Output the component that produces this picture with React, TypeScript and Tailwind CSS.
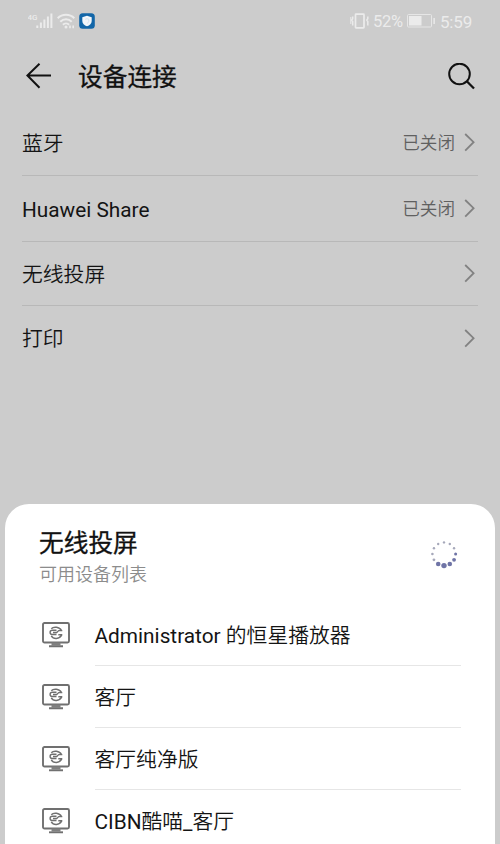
import type { ReactNode } from 'react'

const FONT = "font-['Roboto','Noto_Sans_CJK_SC',sans-serif]"

const settings = [
  { label: '蓝牙', status: '已关闭', height: 'h-[66px]' },
  { label: 'Huawei Share', status: '已关闭', height: 'h-[66px]' },
  { label: '无线投屏', status: '', height: 'h-16' },
  { label: '打印', status: '', height: 'h-16' },
]

const devices = ['Administrator 的恒星播放器', '客厅', '客厅纯净版', 'CIBN酷喵_客厅']

// clockwise from the top
const spinnerDots = [1.2, 1.2, 1.2, 1.5, 1.9, 2.3, 2.7, 2.3, 1.4, 1.3, 1.2, 1.2]

function SignalIcon() {
  return (
    <svg width="25" height="16" viewBox="0 0 25 16" fill="#ebebeb">
      <text x="-0.5" y="7" fontSize="8" fontFamily="Roboto, sans-serif" fontWeight="500">4G</text>
      <rect x="8.3" y="12.5" width="2" height="2.5" />
      <rect x="11.9" y="9.5" width="2" height="5.5" />
      <rect x="15.4" y="6.5" width="2" height="8.5" />
      <rect x="18.9" y="3.5" width="2" height="11.5" />
      <rect x="22.4" y="0.5" width="2" height="14.5" />
    </svg>
  )
}

function WifiIcon() {
  return (
    <svg width="18" height="16" viewBox="0 0 18 16" fill="none" stroke="#ebebeb" strokeWidth="2">
      <path d="M.7 5.2a11.8 11.8 0 0 1 16.6 0" />
      <path d="M3.3 8.7a8 8 0 0 1 11.4 0" />
      <path d="M5.9 11.8a4.4 4.4 0 0 1 6.2 0" />
      <circle cx="9" cy="14" r="1.5" fill="#ebebeb" stroke="none" />
      <path d="M13 12.5v2.7M16.2 12.5v2.7" strokeWidth="1.6" />
    </svg>
  )
}

function ShieldBadge() {
  return (
    <svg width="16" height="16" viewBox="0 0 16 16">
      <rect x="0.2" y="0.2" width="15.6" height="15.6" rx="3.5" fill="#1266a8" />
      <path d="M8 2.8l4.7 1.4v3.8c0 2.7-1.9 4.4-4.7 5.2-2.8-.8-4.7-2.5-4.7-5.2V4.2z" fill="#f2f6fa" />
      <path d="M6.2 6.3 8 5.7l1.8.6v1.9c0 1.1-.8 1.7-1.8 2.1" fill="none" stroke="#c9dded" strokeWidth="0.8" />
    </svg>
  )
}

function VibrateIcon() {
  return (
    <svg width="20" height="16" viewBox="0 0 20 16" fill="none" stroke="#ebebeb" strokeWidth="1.5">
      <rect x="5.5" y="1.2" width="8.5" height="13.6" rx="0.5" strokeWidth="1.7" />
      <path d="M2.7 3.5v2.3L1.7 7l1 1.500v4M17.800 3.500v2.300l-1 1.200 1 1.500v4" />
      <path d="M.8 4v7" strokeWidth="1" />
    </svg>
  )
}

function BatteryIcon() {
  return (
    <svg width="29" height="14" viewBox="0 0 29 14">
      <rect x="0.5" y="0.5" width="24" height="12.5" rx="1" fill="none" stroke="#e6e6e6" />
      <rect x="2" y="2" width="12.5" height="9.5" fill="#ebebeb" />
      <rect x="26.3" y="4" width="1.7" height="6" fill="#e6e6e6" />
    </svg>
  )
}

function Chevron() {
  return (
    <svg width="11" height="19" viewBox="0 0 11 19" fill="none" stroke="#828282" strokeWidth="1.8">
      <path d="M1.2 1 9.600 9.200 1.200 17.600" />
    </svg>
  )
}

function MonitorIcon() {
  return (
    <svg width="28" height="26" viewBox="0 0 28 26" fill="none" stroke="#707070">
      <rect x="1" y="1" width="26" height="19.500" rx="1.500" strokeWidth="1.900" />
      <path d="M9.500 20.500h9v3h-9z" fill="#808080" stroke="none" />
      <path d="M7 24.300h14" strokeWidth="1.900" />
      <path d="M9.300 6.800C11.500 4.300 17.500 4.500 19.500 8.600M9.300 13.800c2 3.600 8.300 3.600 10.300-.9" strokeWidth="1.500" />
      <path d="M14.500 8.300h-4c-3.200 0-3.200 4.200 0 4.200h4M20.300 8.600h-3.600l-2 1.900h-3.700M20.300 12.700h-4" strokeWidth="1.400" />
    </svg>
  )
}

function Spinner() {
  return (
    <svg width="30" height="30" viewBox="-15 -15 30 30">
      {spinnerDots.map((r, i) => {
        const angle = (i * Math.PI) / 6
        return (
          <circle
            key={i}
            cx={11.6 * Math.sin(angle)}
            cy={-11.6 * Math.cos(angle)}
            r={r}
            fill={r > 1.4 ? '#6f74a6' : '#a6a8ba'}
          />
        )
      })}
    </svg>
  )
}

function StatusBar() {
  return (
    <div className="flex h-[42px] shrink-0 items-center justify-between px-7 text-[#ebebeb]">
      <div className="flex items-center gap-1">
        <SignalIcon />
        <WifiIcon />
        <ShieldBadge />
      </div>
      <div className="flex items-center text-[17px] leading-none">
        <VibrateIcon />
        <span className="ml-[3px] mr-[4px] pt-[2px] text-[16.5px] tracking-[-0.2px]">52%</span>
        <BatteryIcon />
        <span className="ml-[4px] pt-[2px] tracking-[-0.2px]">5:59</span>
      </div>
    </div>
  )
}

// Latin runs stay regular, Chinese runs use the lighter cut
function Label({ text }: { text: string }) {
  return (
    <span className="whitespace-pre text-[20.8px] font-[350] leading-none">
      {text.split(/([ -~]+)/).map((part, i) =>
        i % 2 ? <span key={i} className="font-normal">{part}</span> : part
      )}
    </span>
  )
}

function Divided({ height, last, children }: { height: string; last: boolean; children: ReactNode }) {
  return (
    <div className={`flex items-center justify-between ${height} ${last ? '' : 'border-b border-[#b8b8b8]'}`}>
      {children}
    </div>
  )
}

export default function App() {
  return (
    <div className={`flex h-[844px] w-[500px] flex-col overflow-hidden bg-[#cccccc] text-[#141414] ${FONT}`}>
      <StatusBar />

      <header className="flex h-[68px] shrink-0 items-center pl-[26px] pr-[25px]">
        <svg width="25" height="26" viewBox="0 0 25 26" fill="none" stroke="#111" strokeWidth="2">
          <path d="M13.5 .8 1.4 12.5l12.1 12.2M1.4 12.500H25" />
        </svg>
        <h1 className="ml-[27px] flex-1 pt-[5px] text-[24.7px] font-normal leading-none text-[#111] [-webkit-text-stroke:0.3px_#111]">
          设备连接
        </h1>
        <svg width="27" height="27" viewBox="0 0 27 27" fill="none" stroke="#111" strokeWidth="2">
          <circle cx="11.5" cy="11" r="10.3" />
          <path d="M18.8 18.3 26 25.5" strokeWidth="2.3" />
        </svg>
      </header>

      <section className="px-[22px]">
        {settings.map((item, i) => (
          <Divided key={item.label} height={item.height} last={i === settings.length - 1}>
            <div className="flex pt-[3px]">
              <Label text={item.label} />
            </div>
            <div className="flex items-center gap-[9px] pr-[3px]">
              <span className="pt-[3px] text-[17.6px] font-[350] leading-none text-[#606060]">{item.status}</span>
              <Chevron />
            </div>
          </Divided>
        ))}
      </section>

      {/* Bottom sheet */}
      <section className="mx-[5px] mt-auto h-[340px] shrink-0 overflow-hidden rounded-t-[24px] bg-white">
        <div className="flex h-[100px] justify-between pl-[34px] pr-[36px]">
          <div className="pt-[28px]">
            <h2 className="text-[24.7px] font-normal leading-none text-[#111] [-webkit-text-stroke:0.3px_#111]">
              无线投屏
            </h2>
            <p className="mt-[9px] text-[18px] font-[350] leading-none text-[#8c8c8c]">可用设备列表</p>
          </div>
          <div className="pt-[35px]">
            <Spinner />
          </div>
        </div>
        {devices.map(name => (
          <div key={name} className="flex h-[62px] items-center gap-[25px] pl-[36.5px] pr-[34px]">
            <MonitorIcon />
            <div className="flex h-full flex-1 items-center border-b border-[#e6e6e6] pt-[4px]">
              <Label text={name} />
            </div>
          </div>
        ))}
      </section>
    </div>
  )
}
